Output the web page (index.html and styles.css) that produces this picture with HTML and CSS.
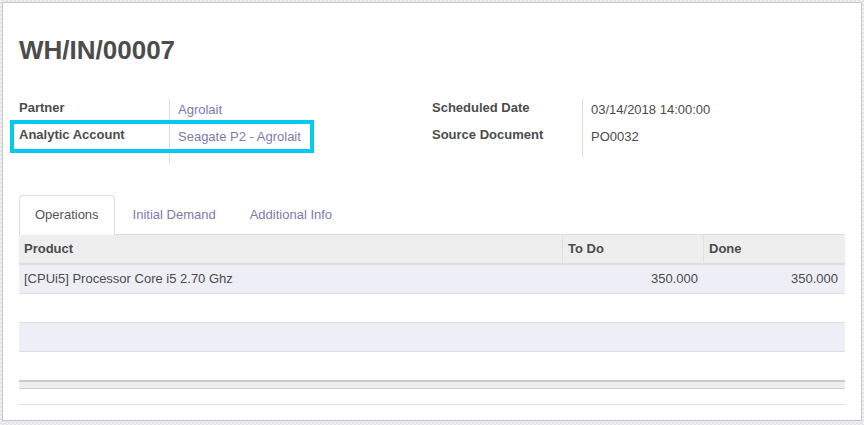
FILE: index.html
```html
<!DOCTYPE html>
<html>
<head>
<meta charset="utf-8">
<link rel="stylesheet" href="styles.css">
</head>
<body>
<div class="sheet">
  <h1 class="title">WH/IN/00007</h1>
  <div class="groups">
    <div class="group group-left">
      <div class="lbl">Partner</div>
      <div class="val"><span class="link">Agrolait</span></div>
      <div class="lbl highlighted">Analytic Account</div>
      <div class="val"><span class="link">Seagate P2 - Agrolait</span></div>
      <div class="lbl spacer"></div>
      <div class="val spacer"></div>
    </div>
    <div class="group group-right">
      <div class="lbl">Scheduled Date</div>
      <div class="val">03/14/2018 14:00:00</div>
      <div class="lbl">Source Document</div>
      <div class="val">PO0032</div>
      <div class="lbl spacer"></div>
      <div class="val spacer"></div>
    </div>
  </div>
  <ul class="tabs">
    <li class="tab active"><span>Operations</span></li>
    <li class="tab"><span>Initial Demand</span></li>
    <li class="tab"><span>Additional Info</span></li>
  </ul>
  <table class="list">
    <colgroup>
      <col class="c-prod">
      <col class="c-todo">
      <col class="c-done">
    </colgroup>
    <thead>
      <tr><th>Product</th><th class="sep">To Do</th><th class="sep">Done</th></tr>
    </thead>
    <tbody>
      <tr class="odd"><td>[CPUi5] Processor Core i5 2.70 Ghz</td><td class="num">350.000</td><td class="num last">350.000</td></tr>
      <tr><td></td><td></td><td></td></tr>
      <tr class="odd"><td></td><td></td><td></td></tr>
      <tr class="nob"><td></td><td></td><td></td></tr>
    </tbody>
    <tfoot>
      <tr><td></td><td></td><td></td></tr>
    </tfoot>
  </table>
  <div class="bottom-line"></div>
</div>
</body>
</html>
```

FILE: styles.css
```css
html, body {
  margin: 0;
  padding: 0;
}
body {
  width: 864px;
  height: 425px;
  overflow: hidden;
  background: repeating-conic-gradient(#e2e2e8 0 25%, #f2f2f5 0 50%) 0 0 / 4px 4px;
  font-family: "Liberation Sans", Arial, sans-serif;
  font-size: 13px;
  color: #4c4c4c;
}
.sheet {
  box-sizing: border-box;
  margin: 2px 3px 0 2px;
  width: 860px;
  height: 419px;
  background: #fff;
  border: 1px solid #c6c6cc;
  padding: 16px 16px 15px 16px;
}
.title {
  margin: 17px 0 0 0;
  font-size: 26px;
  line-height: 1.1;
  font-weight: bold;
  color: #4c4c4c;
}
.groups {
  margin-top: 34px;
  display: grid;
  grid-template-columns: 413px 413px;
  align-items: start;
}
.group {
  display: grid;
  grid-template-columns: 151px 1fr;
  grid-template-rows: 27px 27px auto;
}
.lbl {
  box-sizing: border-box;
  font-weight: bold;
  line-height: 18px;
  border-right: 1px solid #dcdcdc;
  position: relative;
}
.val {
  line-height: 18px;
  padding: 2px 0 0 8px;
}
.group .spacer { padding: 0; }
.group-left .spacer { height: 11px; }
.group-right .spacer { height: 4px; }
.link { color: #7c7bad; }
.highlighted::after {
  content: "";
  position: absolute;
  left: -9px;
  top: -6px;
  width: 304px;
  height: 33px;
  box-sizing: border-box;
  border: 4px solid #00c9f3;
  z-index: 2;
}
.tabs {
  list-style: none;
  margin: 31px 0 0 0;
  padding: 0;
  display: flex;
  border-bottom: 1px solid #dddddd;
}
.tab {
  margin-bottom: -1px;
  margin-right: 2px;
}
.tab span {
  display: block;
  padding: 10px 15px;
  line-height: 18px;
  border: 1px solid transparent;
  border-radius: 4px 4px 0 0;
  color: #7c7bad;
}
.tab.active span {
  color: #555555;
  background: #fff;
  border-color: #dddddd #dddddd transparent #dddddd;
}
.list {
  width: 100%;
  table-layout: fixed;
  border-collapse: separate;
  border-spacing: 0;
}
.c-prod { width: 543px; }
.c-todo { width: 141px; }
.c-done { width: 142px; }
.list th {
  background: #eeeeee;
  text-align: left;
  font-weight: bold;
  padding: 5px;
  line-height: 18px;
  border-bottom: 2px solid #dddddd;
}
.list th.sep { border-left: 1px solid #e0e0e0; }
.list td {
  padding: 5px;
  line-height: 18px;
  height: 18px;
  border-bottom: 1px solid #dddddd;
}
.list tr.odd td { background: #eeeef7; }
.list tr.nob td { border-bottom: 0; }
.list td.num { text-align: right; }
.list td.last { padding-right: 7px; }
.list tfoot td {
  height: 6px;
  padding: 0;
  line-height: 0;
  background: #eeeeee;
  border-top: 2px solid #c8c8c8;
  border-bottom: 1px solid #cfcfcf;
}
.bottom-line {
  margin-top: 15px;
  height: 1px;
  background: #dddddd;
}
```
